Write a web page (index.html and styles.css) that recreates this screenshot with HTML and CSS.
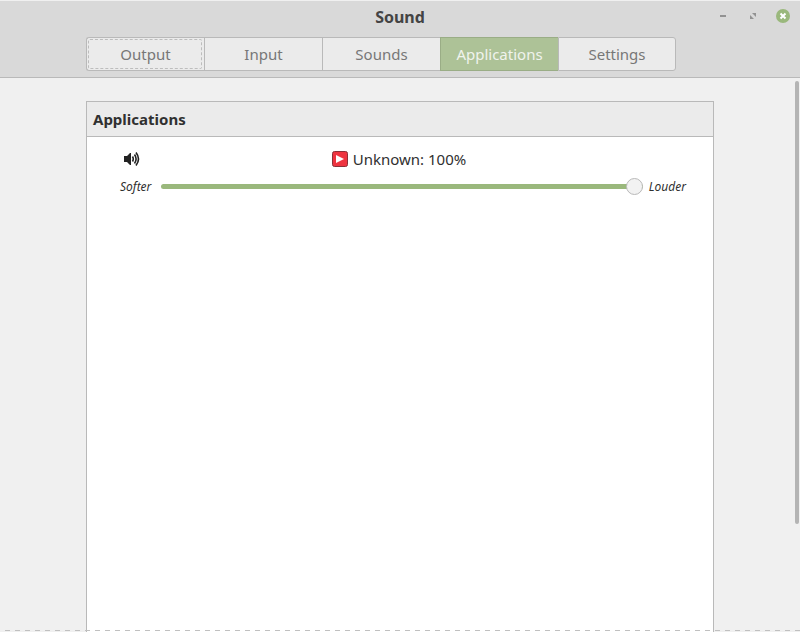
FILE: index.html
```html
<!DOCTYPE html>
<html lang="en">
<head>
<meta charset="utf-8">
<title>Sound</title>
<link rel="stylesheet" href="styles.css">
</head>
<body>
<header class="header">
  <div class="titlebar">
    <h1 class="title">Sound</h1>
    <div class="controls">
      <button class="control" type="button" aria-label="Minimize"><svg width="14" height="14" viewBox="0 0 14 14"><path d="M4 6h6v2H4z" fill="#929292"/></svg></button>
      <button class="control" type="button" aria-label="Maximize"><svg width="14" height="14" viewBox="0 0 14 14"><path d="M6 4h4v4zM4 6v4h4z" fill="#929292"/></svg></button>
      <button class="control" type="button" aria-label="Close"><svg width="14" height="14" viewBox="0 0 14 14"><circle cx="7" cy="7" r="7" fill="#9ab87c"/><path d="M4.500 4.500l5 5M9.500 4.500l-5 5" stroke="#fff" stroke-width="2"/></svg></button>
    </div>
  </div>
  <nav class="tabs column">
    <button class="tab focused" type="button">Output</button>
    <button class="tab" type="button">Input</button>
    <button class="tab" type="button">Sounds</button>
    <button class="tab active" type="button">Applications</button>
    <button class="tab" type="button">Settings</button>
  </nav>
</header>
<main class="content">
  <section class="panel column">
    <h2 class="panel-title">Applications</h2>
    <div class="stream">
      <div class="stream-head">
        <button class="mute" type="button" aria-label="Mute"><svg width="16" height="16" viewBox="0 0 16 16"><path d="M0 5h3l3-3h1v12H6l-3-3H0z" fill="#222"/><path d="M8.500 5.500q1.500 2.500 0 5M10.500 3.500q3.200 4.500 0 9M12 1.500q5 6.500 0 13" fill="none" stroke="#222" stroke-width="1.600"/></svg></button>
        <label class="stream-name" for="volume"><svg width="16" height="16" viewBox="0 0 16 16"><rect x=".5" y=".5" width="15" height="15" rx="2" fill="#ee3440" stroke="#8b3038"/><path d="M4 4l8 4-8 4z" fill="#fff"/></svg>Unknown: 100%</label>
      </div>
      <div class="slider-row">
        <span class="hint">Softer</span>
        <input class="slider" id="volume" type="range" min="0" max="100" value="100">
        <span class="hint">Louder</span>
      </div>
    </div>
  </section>
  <div class="scroll-thumb"></div>
  <div class="overflow-line"></div>
</main>
</body>
</html>
```

FILE: styles.css
```css
* { box-sizing: border-box; }

body {
  margin: 0;
  height: 100vh;
  display: flex;
  flex-direction: column;
  overflow: hidden;
  background: #f0f0f0;
  color: #303030;
  font: 15px/20px "Noto Sans", sans-serif;
}

button {
  margin: 0;
  padding: 0;
  border: 0;
  background: none;
  font: inherit;
  color: inherit;
}

svg { display: block; }

.column {
  width: calc(100% - 172px);
  max-width: 960px;
  margin: 0 auto;
}

.header {
  background: #d9d9d9;
  border-top: 1px solid #f0f0f0;
  border-bottom: 1px solid #b9b9b9;
  padding-bottom: 6px;
}

.titlebar {
  display: grid;
  grid-template-columns: 1fr auto 1fr;
  align-items: center;
  height: 36px;
  padding: 0 10px;
}

.title {
  grid-column: 2;
  margin: 0;
  padding-bottom: 4px;
  font-size: 16px;
  line-height: 20px;
  color: #444;
}

.controls {
  display: flex;
  justify-content: flex-end;
  gap: 16px;
  padding-bottom: 6px;
}

.tabs {
  display: grid;
  grid-template-columns: repeat(5, 1fr);
  padding-right: 38px;
}

.tab {
  position: relative;
  height: 34px;
  border: 1px solid #b9b9b9;
  border-right-width: 0;
  background: #ebebeb;
  color: #777;
}

.tab:first-child { border-radius: 3px 0 0 3px; }

.tab:last-child {
  border-right-width: 1px;
  border-radius: 0 3px 3px 0;
}

.tab.active {
  background: #adc297;
  border-color: #9aad86;
  color: #f0f3ed;
}

.focused::after {
  content: "";
  position: absolute;
  inset: 1px 2px 1px 1px;
  border: 1px dashed #bdbdbd;
  border-radius: 2px;
}

.content {
  position: relative;
  flex: 1;
  min-height: 0;
  display: flex;
  padding-top: 23px;
}

.panel {
  background: #fff;
  border: 1px solid #b9b9b9;
  border-bottom: 0;
}

.panel-title {
  margin: 0;
  padding: 7px 6px;
  background: #ebebeb;
  border-bottom: 1px solid #b9b9b9;
  font-size: 15px;
  line-height: 20px;
}

.stream { padding: 12px 27px 0 33px; }

.stream-head {
  display: grid;
  grid-template-columns: 24px 1fr 32px;
  align-items: center;
  height: 20px;
}

.mute { padding-left: 4px; }

.stream-name {
  display: flex;
  align-items: center;
  justify-content: center;
  gap: 5px;
}

.slider-row {
  display: flex;
  align-items: center;
  padding-top: 6px;
}

.hint {
  padding-top: 2px;
  font-size: 12px;
  line-height: 20px;
  font-style: italic;
}

.slider {
  flex: 1;
  min-width: 0;
  height: 17px;
  margin: 0 6px 0 10px;
  appearance: none;
  background: none;
}

.slider::-webkit-slider-runnable-track {
  height: 5px;
  border-radius: 3px;
  background: #9ab87c;
}

.slider::-webkit-slider-thumb {
  appearance: none;
  width: 17px;
  height: 17px;
  margin-top: -6px;
  border: 1px solid #b9b9b9;
  border-radius: 50%;
  background: #f2f2f2;
}

.scroll-thumb {
  position: absolute;
  top: 3px;
  right: 1px;
  width: 4px;
  height: 80%;
  border-radius: 2px;
  background: #b4b4b4;
}

.overflow-line {
  position: absolute;
  right: 0;
  bottom: 1px;
  left: 0;
  height: 1px;
  background: repeating-linear-gradient(90deg, transparent 0 5px, #c0c0c0 5px 10px);
}
```
